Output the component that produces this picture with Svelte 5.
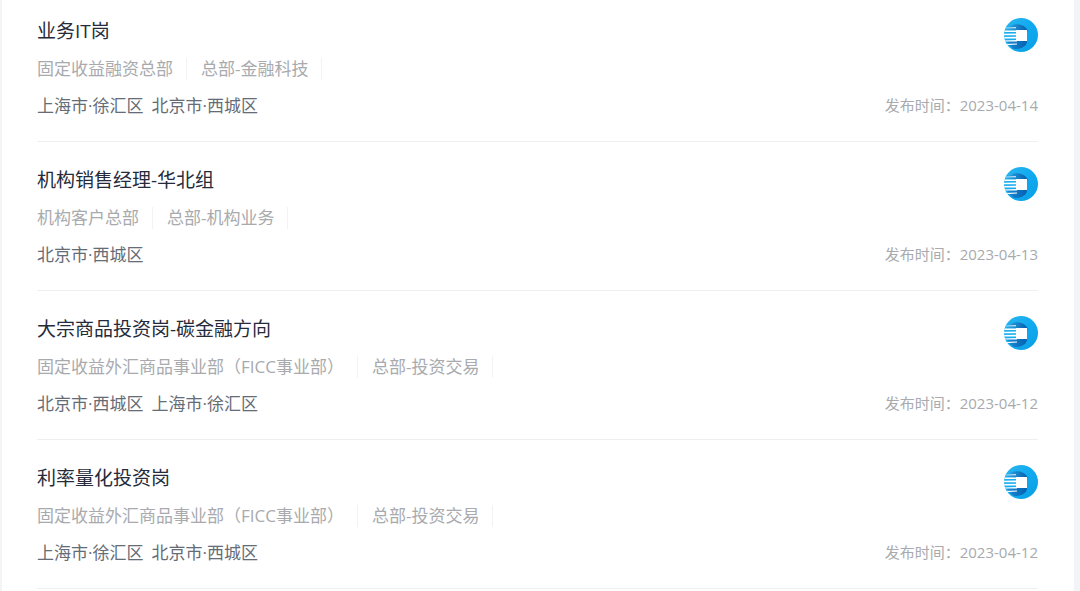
<script lang="ts">
  interface Job {
    title: string;
    tags: string[];
    cities: string[];
    date: string;
  }

  const jobs: Job[] = [
    {
      title: "业务IT岗",
      tags: ["固定收益融资总部", "总部-金融科技"],
      cities: ["上海市·徐汇区", "北京市·西城区"],
      date: "2023-04-14",
    },
    {
      title: "机构销售经理-华北组",
      tags: ["机构客户总部", "总部-机构业务"],
      cities: ["北京市·西城区"],
      date: "2023-04-13",
    },
    {
      title: "大宗商品投资岗-碳金融方向",
      tags: ["固定收益外汇商品事业部（FICC事业部）", "总部-投资交易"],
      cities: ["北京市·西城区", "上海市·徐汇区"],
      date: "2023-04-12",
    },
    {
      title: "利率量化投资岗",
      tags: ["固定收益外汇商品事业部（FICC事业部）", "总部-投资交易"],
      cities: ["上海市·徐汇区", "北京市·西城区"],
      date: "2023-04-12",
    },
  ];
</script>

<svelte:head>
  <title>职位列表</title>
</svelte:head>

<!-- Gradients shared by every logo in the list -->
<svg class="defs" width="0" height="0" aria-hidden="true">
  <defs>
    <linearGradient id="ring" x1="0" y1="0" x2="1" y2="1">
      <stop offset="0" stop-color="#2bb6ee" />
      <stop offset="0.5" stop-color="#10aaf0" />
      <stop offset="1" stop-color="#0a9ee4" />
    </linearGradient>
    <linearGradient id="top" x1="0" y1="0" x2="1" y2="0">
      <stop offset="0" stop-color="#2ba6e4" />
      <stop offset="1" stop-color="#0558a8" />
    </linearGradient>
    <linearGradient id="bottom" x1="0" y1="0" x2="1" y2="0">
      <stop offset="0" stop-color="#1a8ad4" />
      <stop offset="1" stop-color="#0561b0" />
    </linearGradient>
    <clipPath id="disc"><circle cx="17" cy="17" r="17" /></clipPath>
  </defs>
</svg>

<main class="page">
  <ul class="job-list">
    {#each jobs as job}
      <li class="job">
        <div class="info">
          <h3 class="title">{job.title}</h3>
          <div class="tags">
            {#each job.tags as tag}
              <span class="tag">{tag}</span>
            {/each}
          </div>
          <div class="cities">
            {#each job.cities as city}
              <span>{city}</span>
            {/each}
          </div>
        </div>
        <div class="side">
          <svg class="logo" viewBox="0 0 34 34" aria-hidden="true">
            <g clip-path="url(#disc)">
              <rect width="34" height="34" fill="url(#ring)" />
              <path d="M3 11C9 4 21 4 25 15L23 12H3z" fill="url(#top)" />
              <path d="M3 23H23C23 28 18 31 10 31C7 29 5 27 3 23z" fill="url(#bottom)" />
              <path
                d="M2 9.8L12 9.2V10.2H2zM0 12.6L12 12.4V14H0zM0 15.8L12 15.6V17.2H0zM0 19L12 18.8V20.4H0zM0 22.4L13 22V23.6H0zM1 26L13 25.5V26.5L1 27.2z"
                fill="#fff"
              />
              <rect x="12" y="12" width="11" height="11" fill="#fff" />
            </g>
          </svg>
          <span class="date">发布时间：{job.date}</span>
        </div>
      </li>
    {/each}
  </ul>
</main>

<style>
  :global(body) {
    background: #f3f4f6;
  }

  .defs {
    position: absolute;
  }

  .page {
    box-sizing: border-box;
    min-height: 100vh;
    margin: 0 6px 0 2px;
    padding: 0 36px 0 35px;
    background: #fff;
    font-family: "Open Sans", "Noto Sans CJK SC", sans-serif;
  }

  .job-list {
    margin: 0;
    padding: 0;
    list-style: none;
  }

  .job {
    display: flex;
    justify-content: space-between;
    padding: 20px 0 17px;
    border-bottom: 1px solid #eeeff1;
  }

  .job:first-child {
    padding-top: 13px;
  }

  .title {
    margin: 0;
    font-size: 19px;
    font-weight: 400;
    line-height: 37px;
    color: #252b3a;
  }

  .tags,
  .cities {
    display: flex;
    align-items: center;
    height: 37px;
    font-size: 17px;
    line-height: 22px;
    white-space: nowrap;
  }

  .tags {
    gap: 14px;
    color: #a8aaae;
  }

  .tag {
    padding-right: 13px;
    border-right: 1px solid #f2f3f5;
  }

  .cities {
    gap: 8px;
    color: #666c76;
  }

  .side {
    display: flex;
    flex-direction: column;
    align-items: flex-end;
    justify-content: space-between;
  }

  .logo {
    width: 34px;
    height: 34px;
    margin-top: 5px;
  }

  .date {
    font-size: 15px;
    line-height: 37px;
    color: #a8aaae;
    white-space: nowrap;
  }
</style>
